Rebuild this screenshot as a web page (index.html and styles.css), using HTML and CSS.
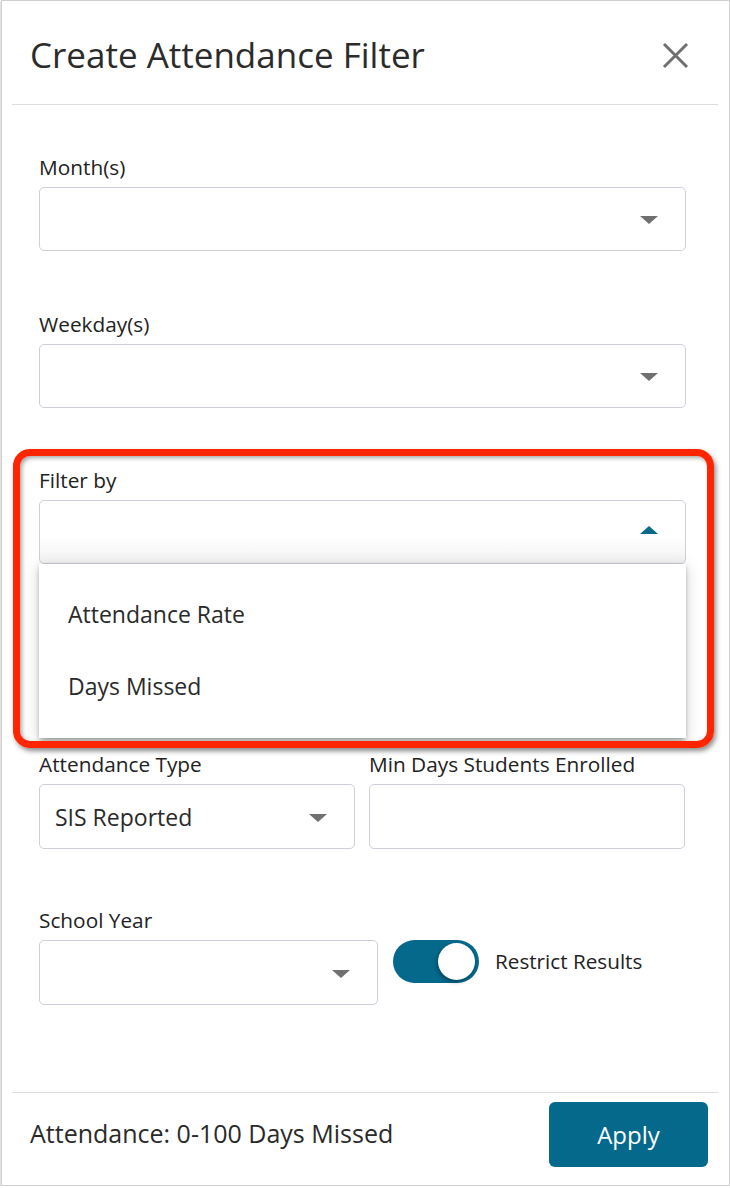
FILE: index.html
```html
<!DOCTYPE html>
<html>
<head>
<meta charset="utf-8">
<link rel="stylesheet" href="styles.css">
</head>
<body>
<div class="dialog">
  <div class="header">
    <h1 class="title">Create Attendance Filter</h1>
    <svg class="close" width="27" height="27" viewBox="0 0 27 27"><path d="M2 2L25 25M25 2L2 25" stroke="#6f6f6f" stroke-width="3" fill="none"/></svg>
  </div>
  <div class="body">
    <div class="field">
      <div class="label">Month(s)</div>
      <div class="select"><span class="value"></span><span class="arrow down"></span></div>
    </div>
    <div class="field">
      <div class="label">Weekday(s)</div>
      <div class="select"><span class="value"></span><span class="arrow down"></span></div>
    </div>
    <div class="field filter">
      <div class="label">Filter by</div>
      <div class="select focused"><span class="value"></span><span class="arrow up"></span></div>
      <div class="menu">
        <div class="item">Attendance Rate</div>
        <div class="item">Days Missed</div>
      </div>
    </div>
    <div class="row two">
      <div class="col">
        <div class="label">Attendance Type</div>
        <div class="select"><span class="value">SIS Reported</span><span class="arrow down"></span></div>
      </div>
      <div class="col">
        <div class="label">Min Days Students Enrolled</div>
        <div class="select input"></div>
      </div>
    </div>
    <div class="row year">
      <div class="col">
        <div class="label">School Year</div>
        <div class="select"><span class="value"></span><span class="arrow down"></span></div>
      </div>
      <div class="toggle-wrap">
        <div class="toggle"><span class="knob"></span></div>
        <span class="toggle-label">Restrict Results</span>
      </div>
    </div>
  </div>
  <div class="footer">
    <span class="summary">Attendance: 0-100 Days Missed</span>
    <button class="apply">Apply</button>
  </div>
  <div class="highlight"></div>
</div>
</body>
</html>
```
FILE: styles.css
```css
html, body {
  margin: 0;
  padding: 0;
  background: #ffffff;
}
body {
  font-family: "Open Sans", Lato, sans-serif;
  color: #222222;
}
.dialog {
  position: relative;
  width: 727px;
  height: 1184px;
  margin-left: 1px;
  border: 1px solid #cfcfcf;
  box-shadow: 0 1px 2px rgba(0,0,0,0.35);
  background: #fff;
  display: flex;
  flex-direction: column;
}
.header {
  box-sizing: border-box;
  margin: 0 11px 0 10px;
  height: 104px;
  border-bottom: 1px solid #dddddd;
  display: flex;
  align-items: center;
  justify-content: space-between;
  padding: 4px 29px 0 18px;
}
.title {
  margin: 0;
  font-weight: 400;
  font-size: 35px;
  color: #2b2b2b;
}
.close {
  display: block;
  margin-top: 2px;
}
.body {
  flex: 1;
  padding: 50px 43px 0 37px;
}
.label {
  font-size: 20.8px;
  line-height: 24px;
  height: 24px;
  color: #222;
}
.field {
  margin-bottom: 60px;
}
.field:first-child {
  margin-bottom: 61px;
}
.field .label, .col .label {
  margin-bottom: 8px;
}
.select {
  box-sizing: border-box;
  height: 64px;
  border: 1px solid #cfcfdb;
  border-radius: 5px;
  display: flex;
  align-items: center;
  justify-content: space-between;
  padding: 0 27px 0 15px;
  background: #fff;
}
.row .select {
  height: 65px;
}
.select.focused {
  background: linear-gradient(#ffffff 55%, #f3f3f3 100%);
}
.value {
  font-size: 23px;
  color: #2a2a2a;
}
.arrow {
  width: 0;
  height: 0;
  border-left: 9px solid transparent;
  border-right: 9px solid transparent;
}
.arrow.down {
  border-top: 8px solid #707070;
  margin-top: 2px;
}
.arrow.up {
  border-bottom: 8px solid #0a6a8a;
  margin-top: -4px;
}
.field.filter {
  margin-bottom: 14px;
}
.menu {
  position: relative;
  height: 174px;
  box-sizing: border-box;
  padding: 14px 0 16px;
  background: #fff;
  box-shadow: 0 5px 6px -2px rgba(0,0,0,0.25), 0 3px 14px 2px rgba(0,0,0,0.12), 0 1px 4px rgba(0,0,0,0.14);
}
.item {
  height: 72px;
  line-height: 72px;
  padding-left: 29px;
  font-size: 23px;
  color: #2a2a2a;
}
.row {
  display: flex;
}
.row.two {
  gap: 14px;
  margin-bottom: 59px;
}
.row.two .col {
  width: 316px;
}
.input {
  padding: 0;
}
.row.year .col {
  width: 339px;
}
.toggle-wrap {
  display: flex;
  align-items: center;
  margin-left: 15px;
  margin-top: 31px;
  height: 44px;
}
.toggle {
  position: relative;
  width: 86px;
  height: 43px;
  border-radius: 22px;
  background: #05698b;
}
.knob {
  position: absolute;
  top: 3px;
  right: 4px;
  width: 37px;
  height: 37px;
  border-radius: 50%;
  background: #fff;
  box-shadow: -1px 2px 4px rgba(0,0,0,0.35);
}
.toggle-label {
  margin-left: 16px;
  font-size: 20.7px;
  color: #222;
  margin-top: -1px;
}
.footer {
  box-sizing: border-box;
  margin: 0 11px 0 10px;
  border-top: 1px solid #dddddd;
  height: 93px;
  display: flex;
  align-items: flex-start;
  justify-content: space-between;
  padding: 9px 10px 0 18px;
}
.summary {
  font-size: 25px;
  line-height: 30px;
  color: #2a2a2a;
  margin-top: 16px;
}
.apply {
  width: 159px;
  height: 65px;
  border: none;
  border-radius: 6px;
  background: #05698b;
  color: #fff;
  font-family: "Open Sans", Lato, sans-serif;
  font-size: 24px;
}
.highlight {
  position: absolute;
  left: 11px;
  top: 448px;
  width: 701px;
  height: 299px;
  box-sizing: border-box;
  border: 7px solid #ff2500;
  border-radius: 17px;
  box-shadow: 2px 3px 5px rgba(0,0,0,0.45), inset 2px 2px 4px rgba(0,0,0,0.35);
  pointer-events: none;
}
```
